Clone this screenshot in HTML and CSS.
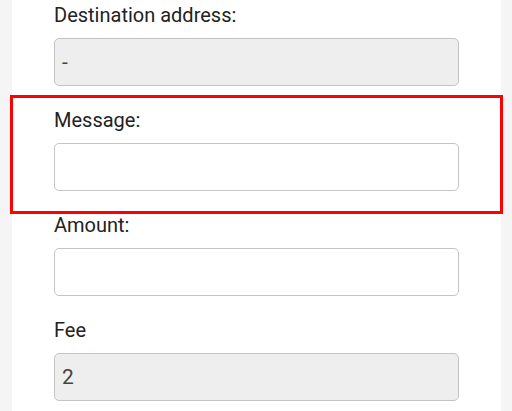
FILE: index.html
```html
<!DOCTYPE html>
<html>
<head>
<meta charset="utf-8">
<link rel="stylesheet" href="styles.css">
</head>
<body>
<div class="page">
  <form class="panel">
    <div class="field">
      <label class="label">Destination address:</label>
      <input class="input" type="text" value="-" disabled>
    </div>
    <div class="field highlight">
      <label class="label">Message:</label>
      <input class="input" type="text">
    </div>
    <div class="field">
      <label class="label">Amount:</label>
      <input class="input" type="text">
    </div>
    <div class="field">
      <label class="label">Fee</label>
      <input class="input" type="text" value="2" disabled>
    </div>
  </form>
</div>
</body>
</html>
```
FILE: styles.css
```css
html, body {
  margin: 0;
  padding: 0;
  background: #f5f5f5;
}
.page {
  height: 411px;
  overflow: hidden;
  padding: 0 11px 0 12px;
}
.panel {
  background: #ffffff;
  margin: 0;
  padding: 3px 42px 0 42px;
  min-height: 411px;
  box-sizing: border-box;
  display: flex;
  flex-direction: column;
  gap: 22px;
}
.field {
  display: flex;
  flex-direction: column;
  position: relative;
}
.highlight::before {
  content: "";
  position: absolute;
  left: -44px;
  right: -44px;
  top: -13px;
  bottom: -23px;
  border: 3px solid #ff0000;
}
.label {
  font-family: Roboto, "Liberation Sans", sans-serif;
  font-size: 20px;
  line-height: 24px;
  color: #222222;
  margin-bottom: 11px;
}
.input {
  box-sizing: border-box;
  height: 48px;
  width: 405px;
  margin: 0;
  border: 1px solid #c4c4c4;
  border-radius: 5px;
  background: #ffffff;
  padding: 0 7px;
  font-family: Roboto, "Liberation Sans", sans-serif;
  font-size: 21px;
  color: #444444;
  outline: none;
}
.input:disabled {
  background: #eeeeee;
  color: #444444;
  -webkit-text-fill-color: #444444;
}
```
